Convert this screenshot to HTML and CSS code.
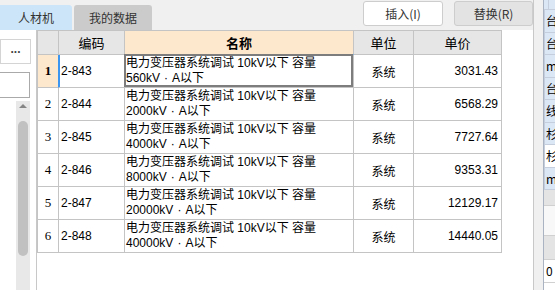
FILE: index.html
```html
<!DOCTYPE html>
<html lang="zh-CN">
<head>
  <meta charset="UTF-8" />
  <title>我的数据</title>
  <link rel="stylesheet" href="styles.css">
</head>
<body>
  <div class="main">
    <div class="topbar">
      <div class="tabs">
        <div class="tab tab-active">人材机</div>
        <div class="tab tab-mine">我的数据</div>
      </div>
      <div class="actions">
        <button type="button" class="btn btn-insert">插入(I)</button>
        <button type="button" class="btn btn-replace">替换(R)</button>
      </div>
    </div>

    <div class="content">
      <div class="left-panel">
        <div class="more-btn">...</div>
        <div class="search-box"></div>
        <div class="scroll-track">
          <div class="scroll-arrow"></div>
          <div class="scroll-thumb"></div>
        </div>
      </div>

      <div class="grid-area">
        <div class="grid" id="grid">
          <div class="cell head"></div>
          <div class="cell head">编码</div>
          <div class="cell head head-sel">名称</div>
          <div class="cell head">单位</div>
          <div class="cell head">单价</div>
        </div>
      </div>
    </div>
  </div>

  <div class="side">
    <div class="side-rows" id="side-rows"></div>
    <div class="side-bar"></div>
    <div class="side-blank"></div>
    <div class="side-head"></div>
    <div class="side-row">0</div>
    <div class="side-row">1</div>
  </div>

  <script>
    const rows = [
      ['2-843', '560kV', '3031.43'],
      ['2-844', '2000kV', '6568.29'],
      ['2-845', '4000kV', '7727.64'],
      ['2-846', '8000kV', '9353.31'],
      ['2-847', '20000kV', '12129.17'],
      ['2-848', '40000kV', '14440.05']
    ];
    const grid = document.getElementById('grid');

    rows.forEach((r, i) => {
      const first = i === 0;
      const name = '<span class="line">电力变压器系统调试 10kV以下 容量</span>' +
        '<span class="line">' + r[1] + '<span class="dot">·</span>A以下</span>';
      const cells = [
        ['cell num' + (first ? ' num-sel' : ''), String(i + 1)],
        ['cell code' + (first ? ' code-sel' : ''), r[0]],
        ['cell name' + (first ? ' name-sel' : ''), name],
        ['cell unit', '系统'],
        ['cell price', r[2]]
      ];
      cells.forEach(c => {
        const div = document.createElement('div');
        div.className = c[0];
        div.innerHTML = c[1];
        grid.appendChild(div);
      });
    });

    // partial column of the panel on the right
    const sideRows = document.getElementById('side-rows');
    ['', '台', '台', 'm', '台', '线', '杉', '杉', 'm'].forEach((t, i) => {
      const row = document.createElement('div');
      row.className = 'side-item' + (i === 0 ? ' side-top' : '') + (i === 7 ? ' side-plain' : '');
      row.innerHTML = '<span class="side-mark"></span><span class="side-text">' + t + '</span>';
      sideRows.appendChild(row);
    });
  </script>
</body>
</html>
```

FILE: styles.css
```css
body {
  margin: 0;
  width: 555px;
  height: 290px;
  overflow: hidden;
  display: flex;
  background: #f0f0f0;
  font-family: "Noto Sans CJK SC", sans-serif;
  font-size: 12px;
  color: #000;
}

.main {
  width: 533px;
  display: flex;
  flex-direction: column;
  border-right: 1px solid #c8c8c8;
}

/* tabs + buttons */
.topbar {
  height: 30px;
  display: flex;
  align-items: flex-start;
}
.tabs {
  display: flex;
  gap: 2px;
  margin-top: 5px;
}
.tab {
  height: 25px;
  line-height: 25px;
  text-align: center;
  color: #333;
}
.tab-active {
  width: 72px;
  background: #cde5f8;
  border-radius: 0 3px 0 0;
}
.tab-mine {
  width: 78px;
  background: #cbcbcb;
  border-radius: 3px 3px 0 0;
}
.actions {
  margin-left: auto;
  display: flex;
  gap: 11px;
  padding-top: 1px;
}
.btn {
  height: 25px;
  padding: 0;
  border: 1px solid #cdcdcd;
  border-radius: 3px;
  font-family: "Noto Sans CJK SC", sans-serif;
  font-size: 12px;
  color: #333;
}
.btn-insert {
  width: 80px;
  background: #fff;
}
.btn-replace {
  width: 79px;
  background: #e3e3e3;
}

.content {
  flex: 1;
  display: flex;
  min-height: 0;
}

/* narrow left panel */
.left-panel {
  width: 36px;
  background: #fff;
  border-right: 1px solid #c8c8c8;
  display: flex;
  flex-direction: column;
}
.more-btn {
  width: 29px;
  height: 23px;
  margin-top: 9px;
  border: 1px solid #d4d4d4;
  line-height: 18px;
  text-align: center;
  font-family: "Liberation Sans", sans-serif;
  font-weight: bold;
  font-size: 12px;
  color: #444;
}
.search-box {
  width: 29px;
  height: 24px;
  margin-top: 8px;
  margin-left: -1px;
  border: 1px solid #aaa;
}
.scroll-track {
  flex: 1;
  width: 14px;
  margin: 3px 0 0 16px;
  background: #e8e8e8;
  display: flex;
  flex-direction: column;
  align-items: center;
}
.scroll-arrow {
  margin-top: 3px;
  border-left: 4px solid transparent;
  border-right: 4px solid transparent;
  border-bottom: 4px solid #868686;
}
.scroll-thumb {
  width: 10px;
  height: 135px;
  margin-top: 13px;
  border-radius: 5px;
  background: #c1c1c1;
}

/* data grid */
.grid-area {
  flex: 1;
  background: #fff;
}
.grid {
  display: grid;
  grid-template-columns: 21px 66px 229px 60px 88px;
  grid-auto-rows: 33px;
  grid-template-rows: 24px;
  width: max-content;
  border-left: 1px solid #c4c4c4;
  border-top: 1px solid #c4c4c4;
  font-family: "Liberation Sans", "Noto Sans CJK SC", sans-serif;
}
.cell {
  box-sizing: border-box;
  border-right: 1px solid #c4c4c4;
  border-bottom: 1px solid #c4c4c4;
  background: #fff;
  white-space: nowrap;
  overflow: hidden;
}
.head {
  background: #e6e6e6;
  display: flex;
  align-items: center;
  justify-content: center;
  font-size: 13px;
}
.head-sel {
  background: #fde8cd;
  font-weight: bold;
  border-bottom-color: #4a9eec;
}
.num {
  display: flex;
  align-items: center;
  justify-content: center;
  font-family: "Liberation Serif", serif;
  font-size: 13px;
}
.num-sel {
  background: #fde8cd;
  font-weight: bold;
  border-right-color: #3d96f0;
}
.code {
  display: flex;
  align-items: center;
  padding-left: 2px;
}
.code-sel {
  box-shadow: inset 1px 0 0 #3d96f0;
}
.name {
  display: flex;
  flex-direction: column;
  padding: 1px 0 0 1px;
  line-height: 15px;
}
.line {
  height: 15px;
}
.dot {
  padding: 0 4px;
}
.name-sel {
  position: relative;
  overflow: visible;
}
.name-sel::after {
  content: "";
  position: absolute;
  top: -1px;
  left: -1px;
  right: 0;
  bottom: 0;
  border: 2px solid #7d7d7d;
}
.unit {
  display: flex;
  align-items: center;
  justify-content: center;
}
.price {
  display: flex;
  align-items: center;
  justify-content: flex-end;
  padding-right: 3px;
}

/* panel cut off at the right edge */
.side {
  flex: 1;
  margin-left: 9px;
  border-left: 1px solid #a9b3c2;
  display: flex;
  flex-direction: column;
  overflow: hidden;
  background: #fff;
}
.side > div {
  flex-shrink: 0;
}
.side-item {
  height: 21.5px;
  display: flex;
  border-bottom: 1px solid #c4cedc;
  background: #dce7f6;
}
.side-top {
  height: 9px;
}
.side-plain {
  background: #fff;
}
.side-mark {
  width: 4px;
  border-right: 1px solid #c4cedc;
}
.side-text {
  padding-left: 1px;
  line-height: 21px;
  white-space: nowrap;
}
.side-bar {
  height: 15px;
  background: #e4e4e4;
  border-bottom: 1px solid #d0d0d0;
}
.side-blank {
  height: 29px;
  background: #f8f8f8;
}
.side-head {
  height: 23px;
  background: #e4e4e4;
  border-top: 1px solid #d0d0d0;
  border-bottom: 1px solid #d0d0d0;
}
.side-row {
  height: 22px;
  line-height: 22px;
  padding-left: 2px;
  border-bottom: 1px solid #d0d0d0;
}
```
